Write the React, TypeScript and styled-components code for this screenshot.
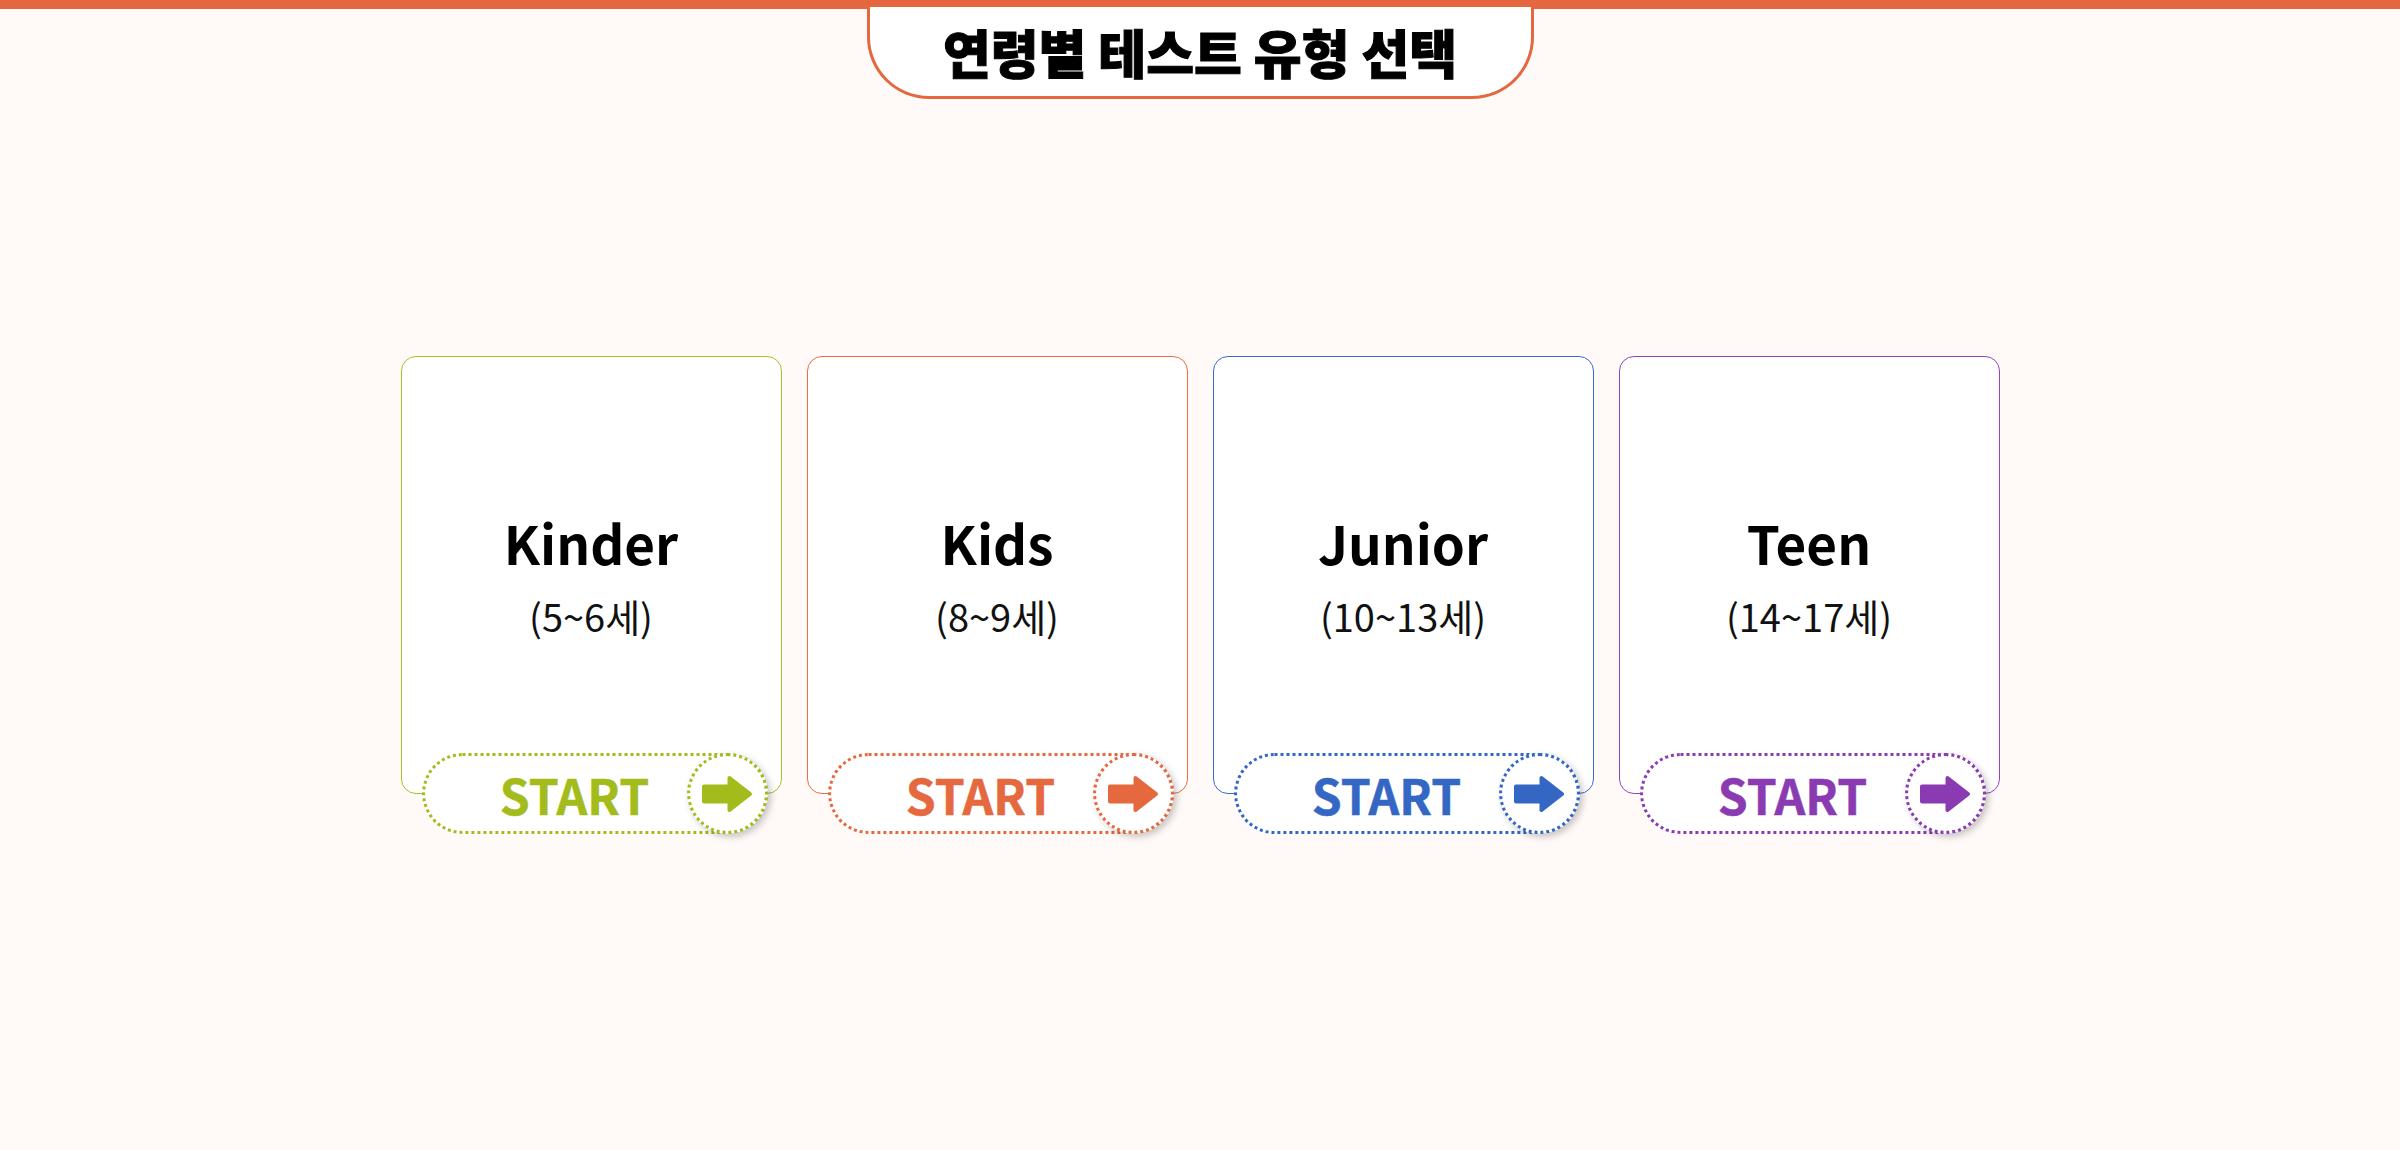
import React from "react";
import styled, { createGlobalStyle } from "styled-components";

const GlobalStyle = createGlobalStyle`
  html, body {
    margin: 0;
    padding: 0;
    background: #fffaf7;
  }
  body {
    font-family: "Noto Sans CJK KR", "Noto Sans", sans-serif;
    color: #000;
  }
  * { box-sizing: border-box; }
`;

const Page = styled.div`
  min-height: 100vh;
  display: flex;
  flex-direction: column;
  background: #fffaf7;
`;

const Header = styled.header`
  height: 99px;
  display: flex;
  justify-content: center;
  border-top: 9px solid #e4673f;
`;

const TitleTab = styled.h1`
  margin: -2px 0 0;
  width: 667px;
  height: 92px;
  background: #fff;
  border: 3px solid #e4673f;
  border-top: none;
  border-radius: 0 0 62px 62px;
  display: flex;
  align-items: center;
  justify-content: center;
  font-family: "Noto Sans CJK KR", sans-serif;
  font-size: 52px;
  font-weight: 900;
  -webkit-text-stroke: 1px #000;
  color: #000;
`;

const Main = styled.main`
  flex: 1;
  display: flex;
  align-items: center;
  justify-content: center;
  padding-bottom: 99px;
`;

const CardGrid = styled.div`
  display: grid;
  grid-template-columns: repeat(4, 381px);
  gap: 25px;
`;

const Card = styled.div<{ $border: string }>`
  position: relative;
  height: 438px;
  background: #fff;
  border: 1px solid ${(p) => p.$border};
  border-radius: 15px;
  display: flex;
  flex-direction: column;
  align-items: center;
  justify-content: center;
`;

const CardTitle = styled.div`
  font-family: "Noto Sans CJK KR", sans-serif;
  font-size: 53px;
  font-weight: 700;
  line-height: 62px;
  color: #000;
`;

const AgeRange = styled.div`
  font-family: "Noto Sans CJK KR", sans-serif;
  font-size: 38px;
  font-weight: 400;
  line-height: 48px;
  margin-top: 19px;
  color: #111;
`;

const StartButton = styled.button<{ $color: string }>`
  position: absolute;
  left: 20px;
  bottom: -41px;
  width: 346px;
  height: 81px;
  padding: 0;
  border: none;
  background: transparent;
  cursor: pointer;
  color: ${(p) => p.$color};
`;

const Pill = styled.span<{ $color: string }>`
  display: flex;
  align-items: center;
  justify-content: center;
  width: 100%;
  height: 100%;
  padding-right: 40px;
  background: #fff;
  border: 3px dotted ${(p) => p.$color};
  border-radius: 41px;
  font-family: "Noto Sans CJK KR", sans-serif;
  font-size: 48px;
  font-weight: 700;
  -webkit-text-stroke: 0.5px ${(p) => p.$color};
  color: ${(p) => p.$color};
`;

const ArrowCircle = styled.span<{ $color: string }>`
  position: absolute;
  right: 0;
  top: 0;
  width: 81px;
  height: 81px;
  border-radius: 50%;
  background: #fff;
  border: 3px dotted ${(p) => p.$color};
  box-shadow: 3px 3px 7px rgba(0, 0, 0, 0.22);
  display: flex;
  align-items: center;
  justify-content: center;
`;

const Arrow = ({ color }: { color: string }) => (
  <svg width="52" height="38" viewBox="0 0 52 38" aria-hidden="true">
    <path
      d="M3 11.5 H28.5 V3 L49 19 L28.5 35 V26.5 H3 Z"
      fill={color}
      stroke={color}
      strokeWidth="4"
      strokeLinejoin="round"
    />
  </svg>
);

type Level = {
  name: string;
  age: string;
  color: string;
  border: string;
};

const levels: Level[] = [
  { name: "Kinder", age: "(5~6세)", color: "#a3bc1c", border: "#a6c224" },
  { name: "Kids", age: "(8~9세)", color: "#e5683e", border: "#ea6d44" },
  { name: "Junior", age: "(10~13세)", color: "#3467c4", border: "#386cc9" },
  { name: "Teen", age: "(14~17세)", color: "#8a3bb2", border: "#8e45bd" },
];

export default function App() {
  return (
    <>
      <GlobalStyle />
      <Page>
        <Header>
          <TitleTab>연령별 테스트 유형 선택</TitleTab>
        </Header>
        <Main>
          <CardGrid>
            {levels.map((l) => (
              <Card key={l.name} $border={l.border}>
                <CardTitle>{l.name}</CardTitle>
                <AgeRange>{l.age}</AgeRange>
                <StartButton $color={l.color}>
                  <Pill $color={l.color}>START</Pill>
                  <ArrowCircle $color={l.color}>
                    <Arrow color={l.color} />
                  </ArrowCircle>
                </StartButton>
              </Card>
            ))}
          </CardGrid>
        </Main>
      </Page>
    </>
  );
}
